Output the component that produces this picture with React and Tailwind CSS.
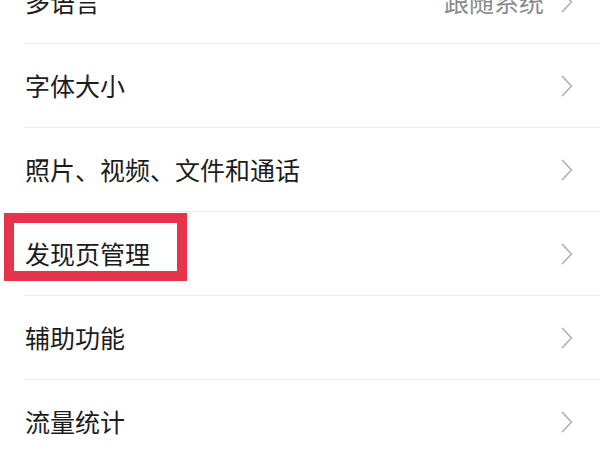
const rows = [
  { label: "多语言", value: "跟随系统" },
  { label: "字体大小" },
  { label: "照片、视频、文件和通话" },
  { label: "发现页管理", marked: true },
  { label: "辅助功能" },
  { label: "流量统计" },
];

const Chevron = () => (
  <svg width="12" height="22" viewBox="0 0 12 22" fill="none" className="shrink-0">
    <path d="M1.5 1.5L10.5 11L1.5 20.5" stroke="#b3b3b3" strokeWidth="1.8" strokeLinecap="round" strokeLinejoin="round" />
  </svg>
);

export default function App() {
  return (
    <div
      className="w-[600px] h-[450px] overflow-hidden bg-white"
      style={{ fontFamily: '"Noto Sans CJK SC", "Noto Sans", sans-serif' }}
    >
      <div className="mt-[-40px]">
        {rows.map((row) => (
          <div key={row.label} className="relative pl-[24px]">
            <div className="flex items-center h-[84px] border-b border-[#ececec] pr-[27px]">
              <span className="flex-1 pl-[1px] text-[25px] leading-none text-[#1c1c1c]">{row.label}</span>
              {row.value && (
                <span className="mr-[17px] text-[25px] leading-none text-[#8a8a8a]">{row.value}</span>
              )}
              <Chevron />
            </div>
            {row.marked && (
              <div className="absolute left-[4px] top-[1px] w-[183px] h-[68px] border-[10px] border-[#e5344c]" />
            )}
          </div>
        ))}
      </div>
    </div>
  );
}
